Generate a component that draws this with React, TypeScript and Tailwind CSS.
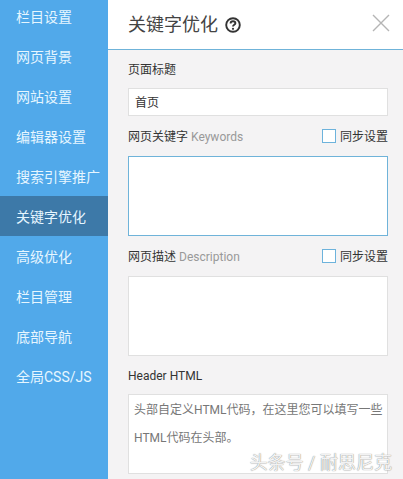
const FONT = "[font-family:Roboto,'Noto_Sans_CJK_SC','Liberation_Sans',sans-serif]";

const MENU = [
  "栏目设置",
  "网页背景",
  "网站设置",
  "编辑器设置",
  "搜索引擎推广",
  "关键字优化",
  "高级优化",
  "栏目管理",
  "底部导航",
  "全局CSS/JS",
];

function Sync() {
  return (
    <label className="flex items-center gap-[4px] text-[12px] leading-[16px] text-[#333]">
      <span className="h-[14px] w-[14px] border border-[#6db3dc] bg-white" />
      <span className="pt-[1px]">同步设置</span>
    </label>
  );
}

function Label({ text, en }: { text: string; en?: string }) {
  return (
    <span className="pt-[2px] text-[12px] leading-[16px] text-[#333]">
      {text}
      {en && <span className="ml-[3px] text-[#999]">{en}</span>}
    </span>
  );
}

export default function App() {
  return (
    <div className={`relative flex h-[479px] w-[403px] overflow-hidden bg-[#f4f3f4] ${FONT}`}>
      <aside className="h-full w-[108px] shrink-0 bg-[#51a9ea]">
        <nav className="-mt-[4px] flex flex-col">
          {MENU.map((m) => (
            <div
              key={m}
              className={`flex h-[40px] items-center pl-[16px] pt-[2px] text-[14px] text-[#e6f6ff] ${
                m === "关键字优化" ? "bg-[#3d79a8]" : ""
              }`}
            >
              {m}
            </div>
          ))}
        </nav>
      </aside>

      <main className="min-w-0 flex-1">
        <header className="flex h-[50px] items-center justify-between border-b border-[#6fb3d9] bg-white pl-[20px] pr-[13px]">
          <div className="flex items-center gap-[7px]">
            <span className="text-[18px] leading-[24px] text-[#444]">关键字优化</span>
            <svg width="16" height="16" viewBox="0 0 16 16" className="text-[#333]">
              <circle cx="8" cy="8" r="6.8" fill="none" stroke="currentColor" strokeWidth="1.9" />
              <path
                d="M5.6 6.4c0-1.4 1.1-2.2 2.4-2.2s2.4.8 2.4 2c0 1.6-2.4 1.6-2.4 3.3"
                fill="none"
                stroke="currentColor"
                strokeWidth="1.9"
              />
              <circle cx="8" cy="11.8" r="1.1" fill="currentColor" />
            </svg>
          </div>
          <svg width="18" height="18" viewBox="0 0 18 18" className="mb-[4px] text-[#b5b5b5]">
            <path d="M1 1l16 16M17 1L1 17" fill="none" stroke="currentColor" strokeWidth="1.4" />
          </svg>
        </header>

        <div className="flex flex-col pl-[20px] pr-[15px]">
          <div className="mt-[11px] flex h-[16px] items-center">
            <Label text="页面标题" />
          </div>
          <div className="mt-[11px] flex h-[28px] items-center border border-[#e0e0e0] bg-white pl-[6px] pt-[2px] text-[12px] text-[#333]">
            首页
          </div>

          <div className="mt-[12px] flex h-[16px] items-center justify-between">
            <Label text="网页关键字" en="Keywords" />
            <Sync />
          </div>
          <div className="mt-[12px] h-[80px] border border-[#6fb3d9] bg-white" />

          <div className="mt-[12px] flex h-[16px] items-center justify-between">
            <Label text="网页描述" en="Description" />
            <Sync />
          </div>
          <div className="mt-[12px] h-[80px] border border-[#e0e0e0] bg-white" />

          <div className="mt-[12px] flex h-[16px] items-center">
            <span className="text-[12px] leading-[16px] text-[#333]">Header HTML</span>
          </div>
          <div className="mt-[10px] h-[80px] border border-[#e0e0e0] bg-white pl-[5px] pt-[1px] text-[12px] leading-[28px] text-[#777]">
            头部自定义HTML代码，在这里您可以填写一些HTML代码在头部。
          </div>
        </div>
      </main>

      <div className="absolute right-[11px] top-[452px] text-[18px] leading-[22px] text-[#f2f2f2] [text-shadow:0_0_1px_#666]">
        头条号 / 耐思尼克
      </div>
    </div>
  );
}
